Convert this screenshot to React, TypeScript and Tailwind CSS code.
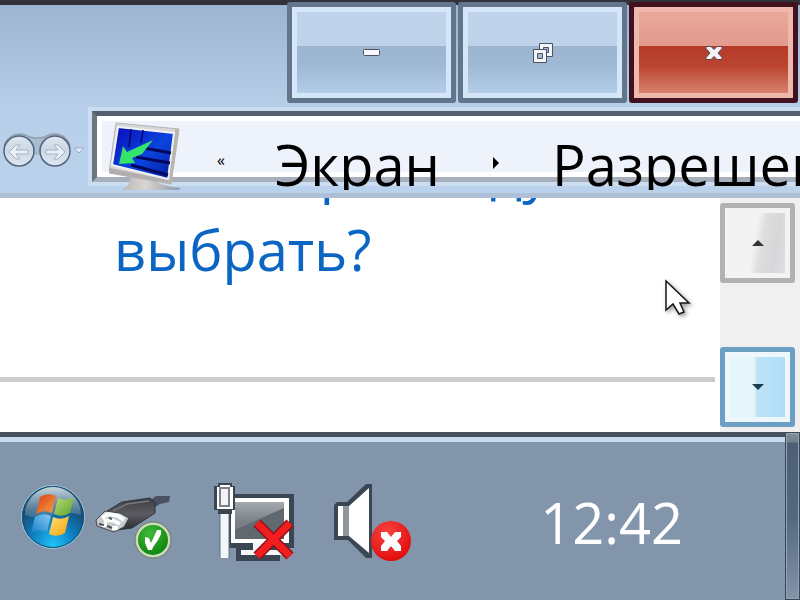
import React from "react";

const MinimizeIcon = () => (
  <svg width="17" height="7" viewBox="0 0 17 7" aria-hidden="true">
    <rect x=".5" y=".5" width="16" height="6" rx="1" fill="#f5f7fa" stroke="#4b5361" />
  </svg>
);

const RestoreIcon = () => (
  <svg width="22" height="22" viewBox="0 0 22 22" aria-hidden="true">
    <path
      fillRule="evenodd"
      d="M7.5 1.5h13v13h-13zM11.5 5.5v5h5v-5z"
      fill="#f2f5f9"
      stroke="#4b5361"
    />
    <path d="M1.5 7.5h13v13h-13z" fill="#f2f5f9" stroke="#4b5361" />
    <path d="M5.5 11.5h5v5h-5z" fill="#a5b9cf" stroke="#4b5361" />
  </svg>
);

const CloseIcon = () => (
  <svg width="18" height="16" viewBox="0 0 18 16" aria-hidden="true">
    <path
      d="M1 1.500h5l3 3 3-3h5v2l-4 4.500 4 4.500v2h-5l-3-3-3 3h-5v-2l4-4.500-4-4.500z"
      fill="#f4f4f8"
      stroke="#5a4650"
      strokeLinejoin="round"
    />
  </svg>
);

const HistoryButtons = () => (
  <svg width="86" height="36" viewBox="0 0 86 36" className="block" aria-hidden="true">
    <defs>
      <linearGradient id="disc" x1="0" y1="0" x2="0" y2="1">
        <stop offset="0" stopColor="#dfe8f2" />
        <stop offset=".45" stopColor="#cbd7e4" />
        <stop offset="1" stopColor="#dde7f3" />
      </linearGradient>
    </defs>
    <path d="M4 14Q8 1 19 1q6 0 10 3 8 2 16 0 4-3 10-3 12 0 16 13l-16 8H19z" fill="#a9bdd1" />
    <path d="M4 12Q10 1 19 1q6 0 10 3 8 2 16 0 4-3 10-3 10 0 15 11" fill="none" stroke="#8f9fb0" strokeWidth="1.500" />
    <circle cx="19" cy="18" r="15" fill="url(#disc)" stroke="#53647a" strokeWidth="1.500" />
    <circle cx="55" cy="18" r="15" fill="url(#disc)" stroke="#53647a" strokeWidth="1.500" />
    <path d="M9 19l7-7h4l-4 5h12v4H16l4 5h-4z" fill="#e9eff6" stroke="#a5b1c1" />
    <path d="M65 19l-7-7h-4l4 5H46v4h12l-4 5h4z" fill="#e9eff6" stroke="#a5b1c1" />
    <path d="M74 15h10l-5 5z" fill="#e4eefa" stroke="#93a9c9" />
  </svg>
);

const DisplayIcon = () => (
  <svg width="74" height="72" viewBox="0 0 74 72" className="block shrink-0" aria-hidden="true">
    <defs>
      <linearGradient id="screen" x1="0" y1="0" x2="1" y2="1">
        <stop offset="0" stopColor="#0809b4" />
        <stop offset=".55" stopColor="#0b45e0" />
        <stop offset="1" stopColor="#03199a" />
      </linearGradient>
      <linearGradient id="stand" x1="0" y1="0" x2="1" y2="0">
        <stop offset="0" stopColor="#bdb8b6" />
        <stop offset=".4" stopColor="#d8d4d1" />
        <stop offset="1" stopColor="#8f97a6" />
      </linearGradient>
    </defs>
    <path d="M13 70q8-4 9-14l26 6q5 4 24 6l-4 3H15z" fill="url(#stand)" />
    <path d="M7 3l63 6-8 55L0 53z" fill="#d9d8d7" stroke="#b3b3b4" />
    <path d="M66 9l4 1-8 54-4-1z" fill="#b9b6ae" />
    <path d="M1 48l59 12-1 3L0 53z" fill="#b1aead" />
    <path d="M9 7l56 6-6 46L3 45z" fill="url(#screen)" stroke="#f1f2f5" strokeWidth="2" />
    <path d="M22 9l-2 18M34 10l-2 13" stroke="#050567" strokeWidth="1.500" />
    <path d="M35 28l27 5M27 37l34 6M22 45l37 10" stroke="#04085c" strokeWidth="3" />
    <path d="M44 20L18 32l-4-6-4 18 16-1-3-5 10-4z" fill="#35e46c" />
  </svg>
);

const StartOrb = () => (
  <svg width="66" height="66" viewBox="0 0 66 66" className="block" aria-hidden="true">
    <defs>
      <radialGradient id="orb" cx=".5" cy=".95" r=".9">
        <stop offset="0" stopColor="#21c4fa" />
        <stop offset=".4" stopColor="#0d7fc0" />
        <stop offset=".75" stopColor="#164c78" />
        <stop offset="1" stopColor="#41677f" />
      </radialGradient>
      <linearGradient id="gloss" x1="0" y1="0" x2="0" y2="1">
        <stop offset="0" stopColor="#d5e2e9" stopOpacity=".9" />
        <stop offset="1" stopColor="#6d91a6" stopOpacity=".4" />
      </linearGradient>
      <linearGradient id="flagRed" x1="0" y1="0" x2="1" y2="1">
        <stop offset="0" stopColor="#d8400f" />
        <stop offset="1" stopColor="#f8a04e" />
      </linearGradient>
      <linearGradient id="flagGreen" x1="0" y1="0" x2="1" y2="1">
        <stop offset="0" stopColor="#bedd79" />
        <stop offset="1" stopColor="#5aa22a" />
      </linearGradient>
      <linearGradient id="flagBlue" x1="0" y1="1" x2="1" y2="0">
        <stop offset="0" stopColor="#1581cb" />
        <stop offset="1" stopColor="#86c9ee" />
      </linearGradient>
      <linearGradient id="flagYellow" x1="0" y1="0" x2="1" y2="1">
        <stop offset="0" stopColor="#ffe278" />
        <stop offset="1" stopColor="#f4a10c" />
      </linearGradient>
    </defs>
    <circle cx="33" cy="33" r="31.500" fill="url(#orb)" stroke="#9ccbe0" />
    <circle cx="33" cy="33" r="30.500" fill="none" stroke="#174c70" />
    <path d="M5 31a28 28 0 0 1 56 0q-14-5-28 0t-28 0z" fill="url(#gloss)" />
    <path d="M20 13q8-5 16-1l-4 17q-8-4-16 1z" fill="url(#flagRed)" />
    <path d="M38 14q8 4 16-1l-4 16q-8 5-16 1z" fill="url(#flagGreen)" />
    <path d="M15 33q8-5 16-1l-4 16q-8-4-16 1z" fill="url(#flagBlue)" />
    <path d="M33 33q8 4 16-1l-4 17q-8 5-16 1z" fill="url(#flagYellow)" />
  </svg>
);

const UsbIcon = () => (
  <svg width="82" height="68" viewBox="0 0 82 68" className="block" aria-hidden="true">
    <defs>
      <linearGradient id="plug" x1="0" y1="0" x2="0" y2="1">
        <stop offset="0" stopColor="#3c3f45" />
        <stop offset=".5" stopColor="#5d5a61" />
        <stop offset="1" stopColor="#2c2b32" />
      </linearGradient>
      <radialGradient id="ok" cx=".4" cy=".3" r=".8">
        <stop offset="0" stopColor="#42b93c" />
        <stop offset="1" stopColor="#068006" />
      </radialGradient>
    </defs>
    <path d="M54 8l8-6h14l-1 6-9 2-8 5z" fill="#4a5262" />
    <path d="M13 17l15-9 28-4 5 4v11L38 34l-15 2-9-7z" fill="url(#plug)" stroke="#2f343d" />
    <path d="M19 17l14-7 22-3" fill="none" stroke="#77767c" strokeWidth="1.500" />
    <path d="M2 26l9-9 15 2 9 5-5 9-10 5L3 32z" fill="#c6cacc" stroke="#40464f" />
    <path d="M8 24l6-4 10 2 6 4M10 27l8-1 8 4M8 31h5M18 34h6" fill="none" stroke="#fbfdfc" strokeWidth="4" />
    <path d="M5 30l5 1M13 32l5 2M15 24l3 1" stroke="#4b5556" strokeWidth="2" />
    <circle cx="59" cy="46" r="18" fill="#c9dbba" stroke="#68785f" />
    <circle cx="59" cy="46" r="15" fill="url(#ok)" />
    <path d="M51 43l4 1 2 5 6-13h4v4l-3 6-5 7-1 3h-4l-3-7z" fill="#fff" />
  </svg>
);

const NetworkIcon = () => (
  <svg width="82" height="80" viewBox="0 0 82 80" className="block" aria-hidden="true">
    <defs>
      <linearGradient id="display" x1="0" y1="0" x2="0" y2="1">
        <stop offset="0" stopColor="#a4a9ae" />
        <stop offset=".5" stopColor="#7c8288" />
        <stop offset="1" stopColor="#70767c" />
      </linearGradient>
    </defs>
    <path d="M15 12h65v54H66v13H22V66h-7z" fill="#3b4653" />
    <path d="M17 16h58v45H17z" fill="#fff" />
    <path d="M21 20h49v37H21z" fill="url(#display)" />
    <path d="M21 48l49-22v31H21z" fill="#606870" />
    <path d="M39 61h14v7h18v5H27v-5h12z" fill="#f5f8fa" />
    <path d="M0 4h4V1h14v3h3v24h-3v4H4v-4H0z" fill="#3b4653" />
    <path d="M3 5h3V3h10v2h3v22H3z" fill="#fff" />
    <path d="M6 6h9v18H6z" fill="#f2f4f5" stroke="#7b8187" strokeWidth="2" />
    <path d="M6 32h9v44H6z" fill="#f2f7fc" />
    <path d="M6 32v44M15 32v44" fill="none" stroke="#60707f" />
    <path d="M43 41l33 33M76 41L43 74" stroke="#8f1117" strokeWidth="10" />
    <path d="M43 41l33 33M76 41L43 74" stroke="#f01e1e" strokeWidth="7" />
  </svg>
);

const VolumeIcon = () => (
  <svg width="80" height="80" viewBox="0 0 80 80" className="block" aria-hidden="true">
    <defs>
      <radialGradient id="mute" cx=".4" cy=".3" r=".8">
        <stop offset="0" stopColor="#f84440" />
        <stop offset="1" stopColor="#df0606" />
      </radialGradient>
    </defs>
    <path d="M0 23l3-3h10L32 2h6v74h-6L14 58H0z" fill="#3b4653" />
    <path d="M4 24h11L35 6v65L15 54H4z" fill="#fff" />
    <path d="M9 24h6v30H9z" fill="#90969b" />
    <circle cx="57" cy="59" r="20" fill="url(#mute)" />
    <path d="M47 50h6l4 5 4-5h6v5l-4 4 4 5v5h-6l-4-5-4 5h-6v-5l4-5-4-4z" fill="#fff" />
  </svg>
);

const Cursor = () => (
  <svg width="32" height="44" viewBox="0 0 32 44" className="block drop-shadow-[2px_2px_2px_rgba(0,0,0,0.4)]" aria-hidden="true">
    <path d="M2 2v29l7-6 6 10 5-2-4-9h9z" fill="#fff" stroke="#17171c" strokeWidth="1.500" />
  </svg>
);

const captionButtons = [
  {
    label: "Свернуть",
    icon: <MinimizeIcon />,
    style:
      "border-[#62758d] bg-[linear-gradient(#bfd4ea_0%,#bed3ea_43%,#9bb4cf_43%,#9fb9d4_65%,#b8d2ed_100%)] shadow-[inset_0_0_0_5px_#d4e6f7]",
  },
  {
    label: "Свернуть в окно",
    icon: <RestoreIcon />,
    style:
      "border-[#62758d] bg-[linear-gradient(#bfd4ea_0%,#bed3ea_43%,#9bb4cf_43%,#9fb9d4_65%,#b8d2ed_100%)] shadow-[inset_0_0_0_5px_#d4e6f7]",
  },
  {
    label: "Закрыть",
    icon: <CloseIcon />,
    style:
      "border-[#42111f] bg-[linear-gradient(#ebaa9d_0%,#e29a8d_43%,#b53b28_43%,#ba4531_65%,#dc8c79_100%)] shadow-[inset_0_0_0_5px_#efb8ad]",
  },
];

const trayIcons = [
  { label: "Безопасное извлечение устройства", icon: <UsbIcon />, style: "ml-2 mt-[62px]" },
  { label: "Сеть", icon: <NetworkIcon />, style: "ml-[38px] mt-[50px]" },
  { label: "Громкость", icon: <VolumeIcon />, style: "ml-[38px] mt-[50px]" },
];

const TitleBar = () => (
  <header className="border-t-[5px] border-[#30343a] border-b-[5px] border-b-[#afbfd5] bg-[linear-gradient(#9bb4d1,#b8cfe9_105px,#bad2ec)]">
    <div className="-mt-[3px] flex justify-end gap-0.5 pr-0.5">
      {captionButtons.map((button) => (
        <button
          key={button.label}
          type="button"
          aria-label={button.label}
          className={`flex h-[101px] w-[169px] items-center justify-center rounded-[3px] border-[5px] ${button.style}`}
        >
          {button.icon}
        </button>
      ))}
    </div>

    <nav className="flex h-[87px] overflow-hidden pt-2">
      <button type="button" aria-label="Назад и вперёд" className="mt-[22px] h-9 w-[86px] shrink-0">
        <HistoryButtons />
      </button>
      <div className="ml-1.5 flex h-[71px] min-w-0 flex-1 items-start border-y-[5px] border-l-[5px] border-t-[#535f6e] border-b-[#a6afbb] border-l-[#6c757d] bg-[#edf2fb] shadow-[0_0_0_4px_#cbddf0,inset_5px_5px_#fff,inset_0_-5px_#fff]">
        <div className="ml-3 mt-1">
          <DisplayIcon />
        </div>
        <button type="button" className="ml-8 mt-[34px] w-3 shrink-0 text-base leading-5 text-black">
          «
        </button>
        <a href="#display" className="ml-12 mt-2 shrink-0 text-[56px] leading-[80px] text-black">
          Экран
        </a>
        <svg width="6" height="12" viewBox="0 0 6 12" className="ml-[53px] mt-[41px] shrink-0" aria-hidden="true">
          <path d="M0 0l6 6-6 6z" />
        </svg>
        <a href="#resolution" className="ml-[53px] mt-2 shrink-0 text-[56px] leading-[80px] text-black">
          Разрешение
        </a>
      </div>
    </nav>
    <div className="h-[3px]" />
  </header>
);

const ScrollBar = () => (
  <div className="flex w-20 shrink-0 flex-col justify-between bg-[#f0f0f0] py-[5px] pr-[5px]">
    <button
      type="button"
      aria-label="Вверх"
      className="flex h-20 items-center justify-center rounded-[3px] border-[5px] border-[#b2b2b2] bg-[linear-gradient(100deg,#f3f3f3_45%,#dededf_56%,#d6d6d9_75%,#e4e4e6)] shadow-[inset_0_0_0_5px_#f3f3f3]"
    >
      <svg width="12" height="6" viewBox="0 0 12 6" aria-hidden="true">
        <path d="M0 6l6-6 6 6z" fill="#333" />
      </svg>
    </button>
    <button
      type="button"
      aria-label="Вниз"
      className="flex h-20 items-center justify-center rounded-[3px] border-[5px] border-[#6d9fc4] bg-[linear-gradient(90deg,#e6f4fc_46%,#bfe3f7_48%,#acdcf6)] shadow-[inset_0_0_0_5px_#eef7fc]"
    >
      <svg width="12" height="6" viewBox="0 0 12 6" aria-hidden="true">
        <path d="M0 0h12L6 6z" fill="#194052" />
      </svg>
    </button>
  </div>
);

const TaskBar = () => (
  <footer className="flex h-[168px] items-start bg-[#8395ab] pl-5 shadow-[inset_0_5px_#465260,inset_0_10px_#c8dbed]">
    <button type="button" aria-label="Пуск" className="mt-[52px]">
      <StartOrb />
    </button>
    {trayIcons.map((item) => (
      <button key={item.label} type="button" aria-label={item.label} className={item.style}>
        {item.icon}
      </button>
    ))}
    <time className="ml-auto mr-[102px] mt-[50px] text-[56px] leading-[80px] text-white">12:42</time>
    <button
      type="button"
      aria-label="Свернуть все окна"
      className="h-full w-[15px] shrink-0 border border-[#394858] bg-[linear-gradient(#858d91_0,#71808c_9px,#4d6075_10px,#53677e_50%,#8395aa)] shadow-[inset_0_0_0_1px_#91a4b2]"
    />
  </footer>
);

const App: React.FC = () => {
  return (
    <div className="flex min-h-screen flex-col overflow-hidden bg-white font-['Open_Sans','Noto_Sans',sans-serif]">
      <TitleBar />
      <main className="relative flex flex-1">
        <div className="flex min-w-0 flex-1 flex-col pr-[5px]">
          <section className="flex-1 overflow-hidden pl-[114px]">
            <a href="#help" className="-mt-[69px] block text-[56px] leading-[80px] text-[#0b66c3]">
              монитора следует
              <br />
              выбрать?
            </a>
          </section>
          <hr className="border-t-[5px] border-[#cccccc]" />
          <div className="h-[50px]" />
        </div>
        <ScrollBar />
        <div className="absolute right-[104px] top-[81px]">
          <Cursor />
        </div>
      </main>
      <TaskBar />
    </div>
  );
};

export default App;
